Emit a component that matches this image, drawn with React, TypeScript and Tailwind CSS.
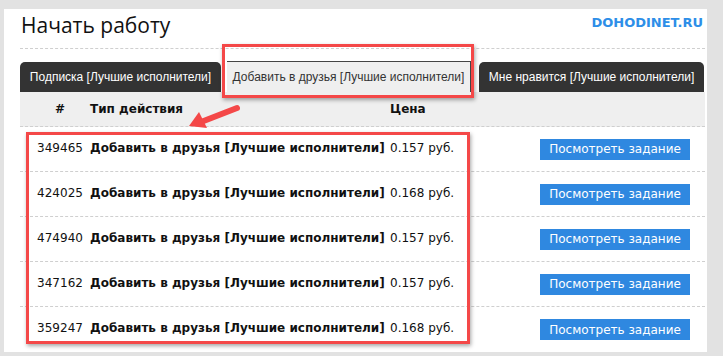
import React from 'react';

const rows = [
  { id: '349465', price: '0.157' },
  { id: '424025', price: '0.168' },
  { id: '474940', price: '0.157' },
  { id: '347162', price: '0.157' },
  { id: '359247', price: '0.168' },
];

const taskName = 'Добавить в друзья [Лучшие исполнители]';

const App = () => {
  return (
    <div className="relative w-[723px] h-[356px] overflow-hidden bg-[#e2e2e2] font-['DejaVu_Sans',sans-serif] text-[12px] text-[#111]">
      {/* white panel */}
      <div className="ml-[4px] mt-[9px] w-[703px] h-[343px] bg-white pl-[16px] pr-[2px]">
        <div className="flex items-start justify-between h-[39px]">
          <h1 className="font-['Open_Sans',sans-serif] text-[21px] leading-none pt-[6px] pl-[1px] text-[#111]">
            Начать работу
          </h1>
          <div className="pt-[4px] pr-[2px] font-bold text-[13px] text-[#2d8ee8]">DOHODINET.RU</div>
        </div>
        <div className="border-t border-dashed border-[#cfcfcf]" />

        {/* tabs */}
        <div className="flex items-end mt-[12px] h-[31px] font-['Liberation_Sans',sans-serif] text-[12px] whitespace-nowrap">
          <div className="shrink-0 w-[201px] h-[30px] rounded-t-[5px] bg-[#333] text-white flex items-center justify-center">
            Подписка [Лучшие исполнители]
          </div>
          <div className="shrink-0 ml-[6px] w-[244px] h-[31px] bg-[#efefef] border-t border-r border-[#444] text-[#333] flex items-center justify-center">
            {taskName}
          </div>
          <div className="shrink-0 ml-[8px] w-[225px] h-[30px] rounded-t-[5px] bg-[#333] text-white flex items-center justify-center">
            Мне нравится [Лучшие исполнители]
          </div>
        </div>

        {/* header */}
        <div className="flex items-center h-[35px] bg-[#efefef] font-bold border-b border-dashed border-[#cfcfcf]">
          <div className="w-[70px] pl-[10px] text-center">#</div>
          <div className="w-[300px]">Тип действия</div>
          <div>Цена</div>
        </div>

        {rows.map((r, i) => (
          <div
            key={r.id}
            className={`flex items-center h-[45px] ${i < rows.length - 1 ? 'border-b border-dashed border-[#cfcfcf]' : ''}`}
          >
            <div className="w-[70px] pl-[10px] text-center pb-[3px]">{r.id}</div>
            <div className="w-[300px] font-bold pb-[3px]">{taskName}</div>
            <div className="flex-1 pb-[3px]">{r.price} руб.</div>
            <button className="w-[150px] h-[21px] mr-[15px] bg-[#2f88e0] text-white text-[12px] flex items-center justify-center">
              Посмотреть задание
            </button>
          </div>
        ))}
      </div>

      {/* annotations */}
      <div className="absolute left-[222px] top-[44px] w-[252px] h-[54px] border-[3px] border-[#f44848] shadow-[1px_2px_4px_rgba(0,0,0,0.35)]" />
      <div className="absolute left-[26px] top-[132px] w-[444px] h-[212px] border-[3px] border-[#f44848] shadow-[1px_2px_4px_rgba(0,0,0,0.35)]" />
      <svg className="absolute left-[185px] top-[100px]" width="60" height="32" viewBox="0 0 60 32">
        <line x1="52" y1="8" x2="16" y2="22" stroke="#f44848" strokeWidth="6" strokeLinecap="round" />
        <polygon points="4,26 14,12 22,28" fill="#f44848" />
      </svg>
    </div>
  );
};

export default App;
